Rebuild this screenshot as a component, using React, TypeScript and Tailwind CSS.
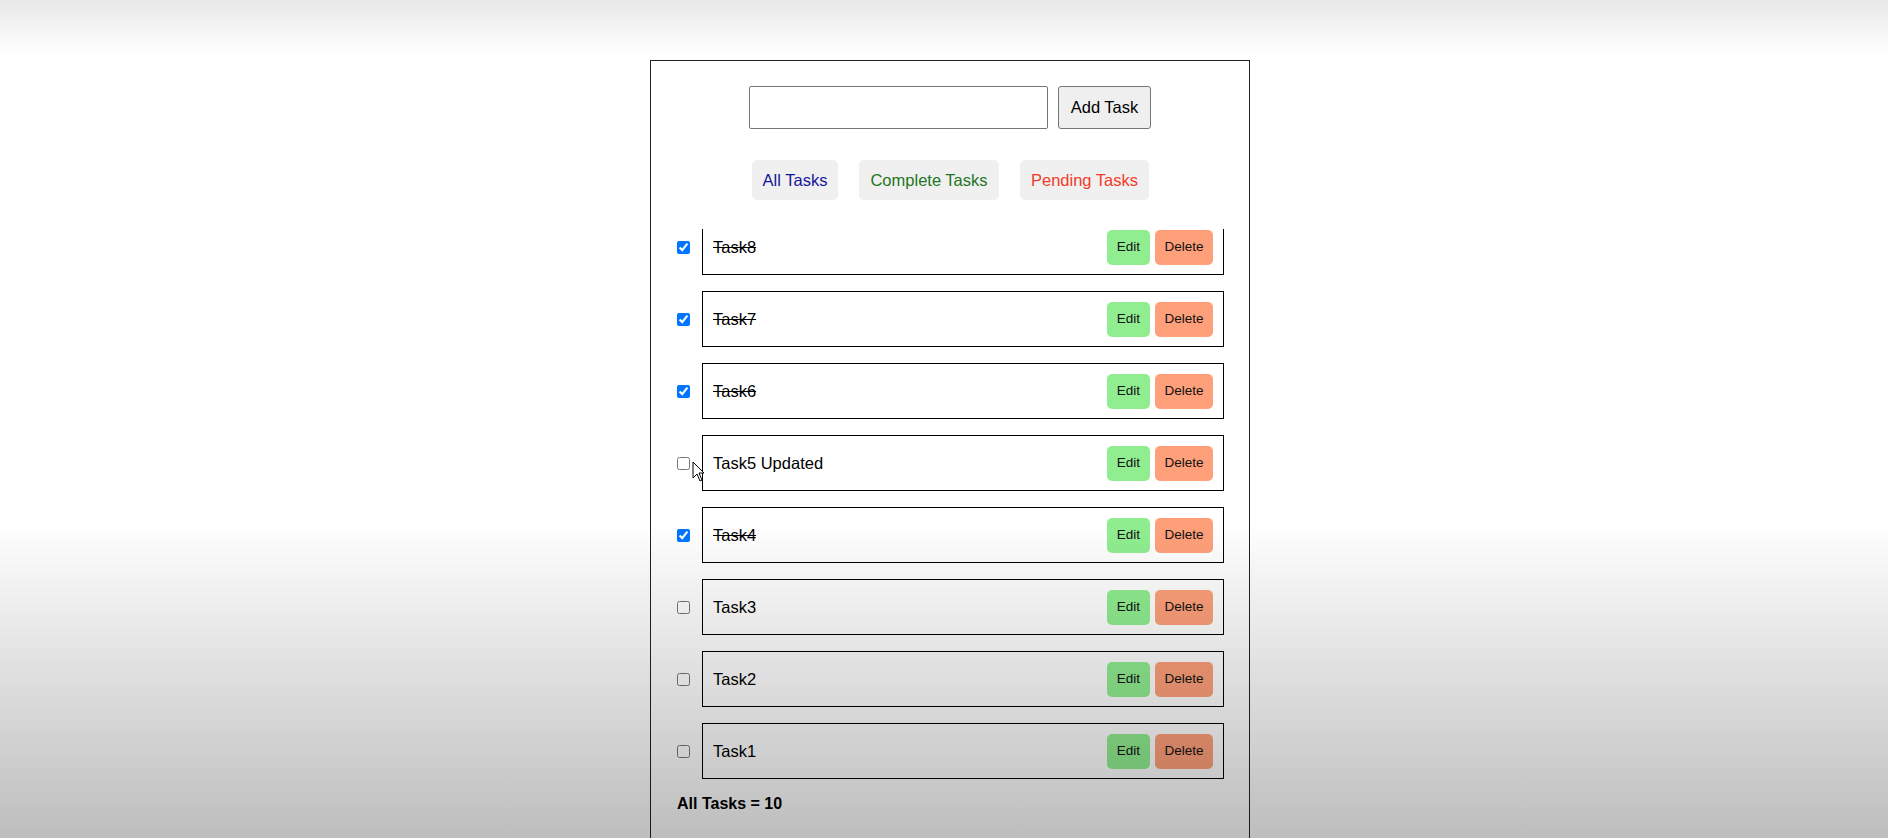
import { useLayoutEffect, useRef } from "react";

const tasks = [
  { id: 10, name: "Task10", done: false },
  { id: 9, name: "Task9", done: false },
  { id: 8, name: "Task8", done: true },
  { id: 7, name: "Task7", done: true },
  { id: 6, name: "Task6", done: true },
  { id: 5, name: "Task5 Updated", done: false },
  { id: 4, name: "Task4", done: true },
  { id: 3, name: "Task3", done: false },
  { id: 2, name: "Task2", done: false },
  { id: 1, name: "Task1", done: false },
];

const TaskRow = ({ name, done }: { name: string; done: boolean }) => {
  return (
    <div className="flex items-center gap-[12px]">
      <input type="checkbox" defaultChecked={done} className="m-0 w-[13px] h-[13px] shrink-0" />
      <div className="flex-1 h-[56px] border border-black flex items-center justify-between pl-[10px] pr-[10px]">
        <span className={"text-[16.5px] text-black " + (done ? "line-through" : "")}>{name}</span>
        <div className="flex items-center gap-[5px]">
          <button className="w-[43px] h-[35px] rounded-[5px] bg-[#90ee90] text-[13.5px] text-[#111]">Edit</button>
          <button className="w-[58px] h-[35px] rounded-[5px] bg-[#ffa07a] text-[13.5px] text-[#111]">Delete</button>
        </div>
      </div>
    </div>
  );
};

const App = () => {
  const listRef = useRef<HTMLDivElement>(null);

  useLayoutEffect(() => {
    if (listRef.current) listRef.current.scrollTop = listRef.current.scrollHeight;
  }, []);

  return (
    <div className="relative h-[838px] overflow-hidden bg-white font-['Liberation_Sans',Arial,sans-serif]">
      <div className="ml-[650px] mt-[60px] w-[600px] h-[900px] border border-[#222] pt-[25px] pl-[26px] pr-[25px]">
        {/* Add form */}
        <div className="flex justify-center gap-[10px] pr-[1px]">
          <input type="text" className="w-[299px] h-[43px] border border-[#767676] rounded-[2px] bg-white px-2" />
          <button className="w-[93px] h-[43px] border border-[#767676] rounded-[3px] bg-[#efefef] text-[16.5px] text-black">
            Add Task
          </button>
        </div>

        {/* Filters */}
        <div className="mt-[31px] flex justify-center gap-[21px]">
          <button className="w-[86px] h-[40px] rounded-[5px] bg-[#f0f0f0] text-[16.5px] text-[#16169a]">All Tasks</button>
          <button className="w-[140px] h-[40px] rounded-[5px] bg-[#f0f0f0] text-[16.5px] text-[#1f751f]">Complete Tasks</button>
          <button className="w-[129px] h-[40px] rounded-[5px] bg-[#f0f0f0] text-[16.5px] text-[#f23a2a]">Pending Tasks</button>
        </div>

        {/* Task list */}
        <div ref={listRef} className="mt-[29px] h-[550px] overflow-hidden flex flex-col gap-4">
          {tasks.map((t) => (
            <TaskRow key={t.id} name={t.name} done={t.done} />
          ))}
        </div>

        <p className="mt-[13px] text-[16px] font-bold text-black">All Tasks = {tasks.length}</p>
      </div>

      {/* mouse pointer */}
      <svg className="absolute left-[692px] top-[461px]" width="13" height="21" viewBox="0 0 13 21">
        <path d="M1 1 L1 17 L5 13 L8 20 L10 19 L7 12 L12 12 Z" fill="white" stroke="black" strokeWidth="1" strokeLinejoin="round" />
      </svg>

      {/* video shading */}
      <div className="pointer-events-none absolute inset-0 bg-[linear-gradient(to_bottom,rgba(0,0,0,0.09)_0px,rgba(0,0,0,0)_55px,rgba(0,0,0,0)_520px,rgba(0,0,0,0.26)_838px)]"></div>
    </div>
  );
};

export default App;
